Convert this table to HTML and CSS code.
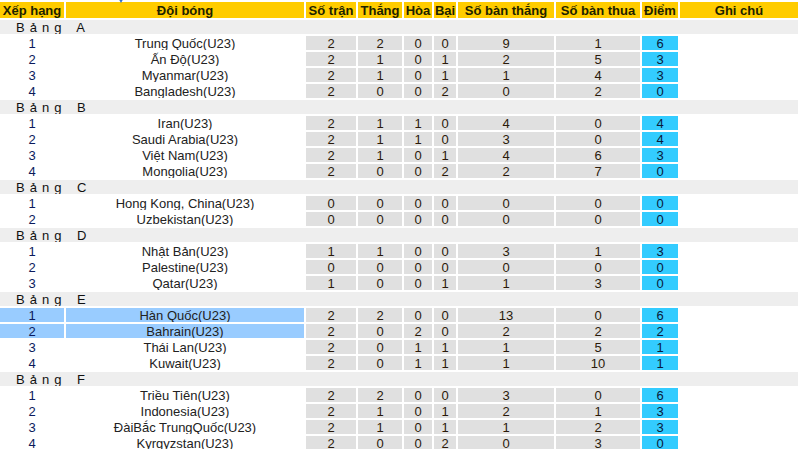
FILE: index.html
```html
<!DOCTYPE html>
<html lang="vi">
<head>
<meta charset="utf-8">
<title>Bảng xếp hạng</title>
<link rel="stylesheet" href="styles.css">
</head>
<body>
<div class="page">
  <span class="marker"></span>
  <table class="standings">
    <colgroup>
      <col class="c-rank"><col class="c-team"><col class="c-played"><col class="c-win"><col class="c-draw"><col class="c-loss"><col class="c-gf"><col class="c-ga"><col class="c-pts"><col class="c-note">
    </colgroup>
    <thead>
      <tr><th>Xếp hạng</th><th>Đội bóng</th><th>Số trận</th><th>Thắng</th><th>Hòa</th><th>Bại</th><th>Số bàn thắng</th><th>Số bàn thua</th><th>Điểm</th><th>Ghi chú</th></tr>
    </thead>
    <tbody>
      <tr class="group"><td colspan="10">Bảng A</td></tr>
      <tr><td class="rank">1</td><td class="team">Trung Quốc(U23)</td><td class="num">2</td><td class="num">2</td><td class="num">0</td><td class="num">0</td><td class="num">9</td><td class="num">1</td><td class="pts">6</td><td></td></tr>
      <tr><td class="rank">2</td><td class="team">Ấn Độ(U23)</td><td class="num">2</td><td class="num">1</td><td class="num">0</td><td class="num">1</td><td class="num">2</td><td class="num">5</td><td class="pts">3</td><td></td></tr>
      <tr><td class="rank">3</td><td class="team">Myanmar(U23)</td><td class="num">2</td><td class="num">1</td><td class="num">0</td><td class="num">1</td><td class="num">1</td><td class="num">4</td><td class="pts">3</td><td></td></tr>
      <tr><td class="rank">4</td><td class="team">Bangladesh(U23)</td><td class="num">2</td><td class="num">0</td><td class="num">0</td><td class="num">2</td><td class="num">0</td><td class="num">2</td><td class="pts">0</td><td></td></tr>
      <tr class="group"><td colspan="10">Bảng B</td></tr>
      <tr><td class="rank">1</td><td class="team">Iran(U23)</td><td class="num">2</td><td class="num">1</td><td class="num">1</td><td class="num">0</td><td class="num">4</td><td class="num">0</td><td class="pts">4</td><td></td></tr>
      <tr><td class="rank">2</td><td class="team">Saudi Arabia(U23)</td><td class="num">2</td><td class="num">1</td><td class="num">1</td><td class="num">0</td><td class="num">3</td><td class="num">0</td><td class="pts">4</td><td></td></tr>
      <tr><td class="rank">3</td><td class="team">Việt Nam(U23)</td><td class="num">2</td><td class="num">1</td><td class="num">0</td><td class="num">1</td><td class="num">4</td><td class="num">6</td><td class="pts">3</td><td></td></tr>
      <tr><td class="rank">4</td><td class="team">Mongolia(U23)</td><td class="num">2</td><td class="num">0</td><td class="num">0</td><td class="num">2</td><td class="num">2</td><td class="num">7</td><td class="pts">0</td><td></td></tr>
      <tr class="group"><td colspan="10">Bảng C</td></tr>
      <tr><td class="rank">1</td><td class="team">Hong Kong, China(U23)</td><td class="num">0</td><td class="num">0</td><td class="num">0</td><td class="num">0</td><td class="num">0</td><td class="num">0</td><td class="pts">0</td><td></td></tr>
      <tr><td class="rank">2</td><td class="team">Uzbekistan(U23)</td><td class="num">0</td><td class="num">0</td><td class="num">0</td><td class="num">0</td><td class="num">0</td><td class="num">0</td><td class="pts">0</td><td></td></tr>
      <tr class="group"><td colspan="10">Bảng D</td></tr>
      <tr><td class="rank">1</td><td class="team">Nhật Bản(U23)</td><td class="num">1</td><td class="num">1</td><td class="num">0</td><td class="num">0</td><td class="num">3</td><td class="num">1</td><td class="pts">3</td><td></td></tr>
      <tr><td class="rank">2</td><td class="team">Palestine(U23)</td><td class="num">0</td><td class="num">0</td><td class="num">0</td><td class="num">0</td><td class="num">0</td><td class="num">0</td><td class="pts">0</td><td></td></tr>
      <tr><td class="rank">3</td><td class="team">Qatar(U23)</td><td class="num">1</td><td class="num">0</td><td class="num">0</td><td class="num">1</td><td class="num">1</td><td class="num">3</td><td class="pts">0</td><td></td></tr>
      <tr class="group"><td colspan="10">Bảng E</td></tr>
      <tr class="hl"><td class="rank">1</td><td class="team">Hàn Quốc(U23)</td><td class="num">2</td><td class="num">2</td><td class="num">0</td><td class="num">0</td><td class="num">13</td><td class="num">0</td><td class="pts">6</td><td></td></tr>
      <tr class="hl"><td class="rank">2</td><td class="team">Bahrain(U23)</td><td class="num">2</td><td class="num">0</td><td class="num">2</td><td class="num">0</td><td class="num">2</td><td class="num">2</td><td class="pts">2</td><td></td></tr>
      <tr><td class="rank">3</td><td class="team">Thái Lan(U23)</td><td class="num">2</td><td class="num">0</td><td class="num">1</td><td class="num">1</td><td class="num">1</td><td class="num">5</td><td class="pts">1</td><td></td></tr>
      <tr><td class="rank">4</td><td class="team">Kuwait(U23)</td><td class="num">2</td><td class="num">0</td><td class="num">1</td><td class="num">1</td><td class="num">1</td><td class="num">10</td><td class="pts">1</td><td></td></tr>
      <tr class="group"><td colspan="10">Bảng F</td></tr>
      <tr><td class="rank">1</td><td class="team">Triều Tiên(U23)</td><td class="num">2</td><td class="num">2</td><td class="num">0</td><td class="num">0</td><td class="num">3</td><td class="num">0</td><td class="pts">6</td><td></td></tr>
      <tr><td class="rank">2</td><td class="team">Indonesia(U23)</td><td class="num">2</td><td class="num">1</td><td class="num">0</td><td class="num">1</td><td class="num">2</td><td class="num">1</td><td class="pts">3</td><td></td></tr>
      <tr><td class="rank">3</td><td class="team">ĐàiBắc TrungQuốc(U23)</td><td class="num">2</td><td class="num">1</td><td class="num">0</td><td class="num">1</td><td class="num">1</td><td class="num">2</td><td class="pts">3</td><td></td></tr>
      <tr><td class="rank">4</td><td class="team">Kyrgyzstan(U23)</td><td class="num">2</td><td class="num">0</td><td class="num">0</td><td class="num">2</td><td class="num">0</td><td class="num">3</td><td class="pts">0</td><td></td></tr>
    </tbody>
  </table>
</div>
</body>
</html>
```

FILE: styles.css
```css
html, body {
  margin: 0;
  padding: 0;
  background: #ffffff;
  overflow: hidden;
}

.page {
  position: relative;
  width: 800px;
  height: 449px;
  overflow: hidden;
  font-family: "Liberation Sans", Arial, sans-serif;
}

.marker {
  position: absolute;
  left: 117px;
  top: -4px;
  width: 0;
  height: 0;
  border-left: 4px solid transparent;
  border-right: 4px solid transparent;
  border-top: 7px solid #2f6fd3;
  z-index: 2;
}

.standings {
  table-layout: fixed;
  border-collapse: separate;
  border-spacing: 2px;
  width: 802px;
  margin-left: -2px;
  font-size: 13px;
  color: #1a1a1a;
}

.c-rank { width: 64px; }
.c-team { width: 238px; }
.c-played { width: 50px; }
.c-win { width: 44px; }
.c-draw { width: 28px; }
.c-loss { width: 22px; }
.c-gf { width: 96px; }
.c-ga { width: 84px; }
.c-pts { width: 36px; }
.c-note { width: 118px; }

.standings th {
  background: #ffcc00;
  color: #1c2200;
  font-weight: bold;
  height: 15px;
  line-height: 15px;
  padding: 1px 0 0;
  text-align: center;
  white-space: nowrap;
  overflow: hidden;
}

.standings td {
  height: 12px;
  line-height: 12px;
  padding: 2px 0 0;
  text-align: center;
  white-space: nowrap;
  overflow: hidden;
}

.group td {
  background: #eeeeee;
  text-align: left;
  padding-left: 16px;
  letter-spacing: 5px;
  word-spacing: 2px;
  color: #111111;
}

.rank { color: #0b1a5c; }
.team { color: #222222; }

.num {
  background: #e0e0e0;
  color: #2a1a0a;
}

.pts {
  background: #33ccff;
  color: #0a1a3a;
}

.hl .rank,
.hl .team {
  background: #99ccff;
}
```
